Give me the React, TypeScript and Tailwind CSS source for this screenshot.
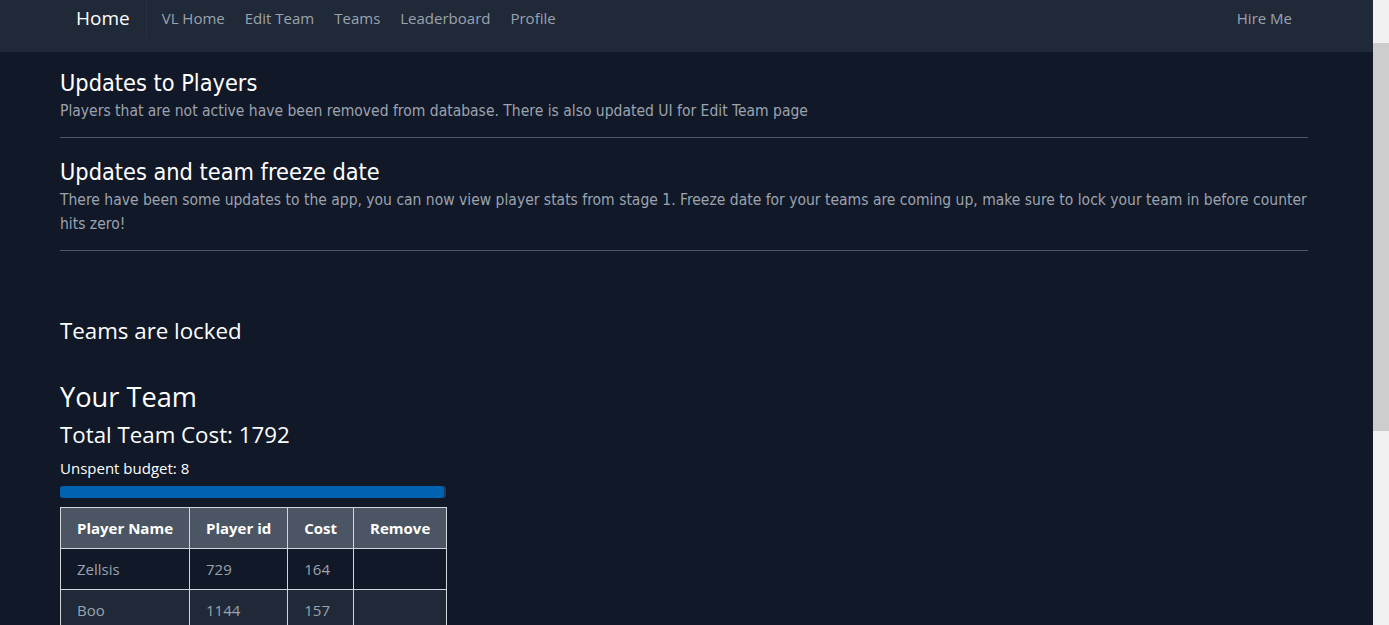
import React from 'react';

const navLinks = ['VL Home', 'Edit Team', 'Teams', 'Leaderboard', 'Profile'];

const news = [
  {
    title: 'Updates to Players',
    body: 'Players that are not active have been removed from database. There is also updated UI for Edit Team page',
  },
  {
    title: 'Updates and team freeze date',
    body: 'There have been some updates to the app, you can now view player stats from stage 1. Freeze date for your teams are coming up, make sure to lock your team in before counter hits zero!',
  },
];

const players = [
  { name: 'Zellsis', id: 729, cost: 164 },
  { name: 'Boo', id: 1144, cost: 157 },
];

export default function App() {
  return (
    <div className="flex h-[625px] overflow-hidden bg-[#111827] font-['Open_Sans','Noto_Sans',sans-serif]">
      <div className="min-w-0 flex-1">
        <nav className="h-[52px] bg-[#1f2937]">
          <div className="flex h-[37px] items-center pl-[76px] pr-[81px]">
            <span className="border-r border-[#263244] pr-4 text-[19px] leading-[37px] text-white">Home</span>
            <div className="ml-[15px] flex gap-5 text-[15px] text-[#9ca3af]">
              {navLinks.map((l) => (
                <span key={l}>{l}</span>
              ))}
            </div>
            <span className="ml-auto text-[15px] text-[#9ca3af]">Hire Me</span>
          </div>
        </nav>

        <main className="pl-[60px] pr-[65px]">
          <div className="pt-[14px]">
            {news.map((n) => (
              <div key={n.title} className="border-b border-[#4b5563] pb-[14px] pt-[2px] [&+div]:pt-[19px]">
                <h2 className="font-['DejaVu_Sans_Condensed','Liberation_Sans_Narrow',sans-serif] text-[23.3px] leading-[30px] text-white">
                  {n.title}
                </h2>
                <p className="mt-px font-['DejaVu_Sans_Condensed','Liberation_Sans_Narrow',sans-serif] text-[15.5px] leading-[24px] text-[#9ca3af]">
                  {n.body}
                </p>
              </div>
            ))}
          </div>

          <h3 className="mt-[64px] text-[22.3px] leading-[32px] text-white">Teams are locked</h3>
          <h2 className="mt-[32px] text-[27.2px] leading-[36px] text-white">Your Team</h2>
          <h3 className="mt-1 text-[22.3px] leading-[32px] text-white">Total Team Cost: 1792</h3>
          <p className="mt-[7px] text-[15px] leading-[20px] text-white">Unspent budget: 8</p>
          <div className="mt-[8px] h-[12px] w-[386px] rounded-[3px] bg-[#1e3a5f]">
            <div className="h-full w-[99.5%] rounded-[3px] bg-[#0062b0]" />
          </div>

          <table className="mt-[9px] border-collapse border border-[#d1d5db] text-[15px]">
            <thead>
              <tr className="h-[41px] bg-[#4b5563] text-white">
                <th className="border border-[#d1d5db] px-4 font-bold">Player Name</th>
                <th className="border border-[#d1d5db] px-4 font-bold">Player id</th>
                <th className="border border-[#d1d5db] px-4 font-bold">Cost</th>
                <th className="border border-[#d1d5db] px-4 font-bold">Remove</th>
              </tr>
            </thead>
            <tbody>
              {players.map((p, i) => (
                <tr key={p.id} className={`h-[41px] text-[#9ca3af] ${i % 2 ? 'bg-[#1f2937]' : 'bg-[#111827]'}`}>
                  <td className="border border-[#d1d5db] px-4">{p.name}</td>
                  <td className="border border-[#d1d5db] px-4">{p.id}</td>
                  <td className="border border-[#d1d5db] px-4">{p.cost}</td>
                  <td className="border border-[#d1d5db] px-4"></td>
                </tr>
              ))}
            </tbody>
          </table>
        </main>
      </div>

      {/* browser scrollbar */}
      <div className="w-[16px] shrink-0 bg-[#f0f0f0] pt-[43px]">
        <div className="h-[388px] bg-[#cdcdcd]" />
      </div>
    </div>
  );
}
